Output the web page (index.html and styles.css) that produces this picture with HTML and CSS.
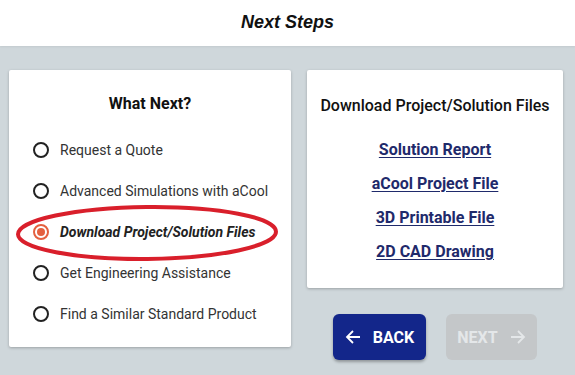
FILE: index.html
```html
<!DOCTYPE html>
<html>
<head>
<meta charset="utf-8">
<link rel="stylesheet" href="styles.css">
</head>
<body>
<header class="header"><h1 class="title">Next Steps</h1></header>
<main class="main">
  <section class="card left-card">
    <h2 class="card-title">What Next?</h2>
    <ul class="options">
      <li class="option"><span class="radio"></span><span class="label">Request a Quote</span></li>
      <li class="option"><span class="radio"></span><span class="label">Advanced Simulations with aCool</span></li>
      <li class="option selected"><span class="radio"><span class="dot"></span></span><span class="label">Download Project/Solution Files</span></li>
      <li class="option"><span class="radio"></span><span class="label">Get Engineering Assistance</span></li>
      <li class="option"><span class="radio"></span><span class="label">Find a Similar Standard Product</span></li>
    </ul>
    <svg class="circle-mark" width="270" height="62" viewBox="0 0 270 62">
      <ellipse cx="135" cy="31" rx="129" ry="26" fill="none" stroke="#d91f2b" stroke-width="4" transform="rotate(-0.6 135 31)"/>
    </svg>
  </section>
  <div class="right-col">
    <section class="card right-card">
      <h2 class="card-title small">Download Project/Solution Files</h2>
      <div class="links">
        <a class="link" href="#">Solution Report</a>
        <a class="link" href="#">aCool Project File</a>
        <a class="link" href="#">3D Printable File</a>
        <a class="link" href="#">2D CAD Drawing</a>
      </div>
    </section>
    <div class="buttons">
      <button class="btn back"><svg width="16" height="16" viewBox="0 0 16 16"><path d="M15 8H2M8 2L2 8l6 6" fill="none" stroke="#fff" stroke-width="1.8"/></svg><span>BACK</span></button>
      <button class="btn next"><span>NEXT</span><svg width="16" height="16" viewBox="0 0 16 16"><path d="M1 8h13M8 2l6 6-6 6" fill="none" stroke="#e4e7e9" stroke-width="1.8"/></svg></button>
    </div>
  </div>
</main>
</body>
</html>
```
FILE: styles.css
```css
html, body {
  margin: 0;
  padding: 0;
}
body {
  width: 575px;
  height: 375px;
  overflow: hidden;
  background: #cfd7db;
  font-family: Roboto, "Liberation Sans", sans-serif;
}
.header {
  height: 46px;
  background: #fff;
  display: flex;
  align-items: center;
  justify-content: center;
  box-shadow: 0 1px 2px rgba(0,0,0,0.06);
}
.title {
  margin: 0;
  font-family: "Liberation Sans", Arial, sans-serif;
  font-weight: bold;
  font-style: italic;
  font-size: 18px;
  color: #111;
  padding-bottom: 1px;
}
.main {
  display: flex;
  gap: 16px;
  padding: 24px 0 0 9px;
}
.card {
  background: #fff;
  border-radius: 2px;
  box-shadow: 0 1px 3px rgba(0,0,0,0.25);
  box-sizing: border-box;
}
.left-card {
  position: relative;
  width: 282px;
  height: 277px;
  padding-top: 24px;
}
.card-title {
  margin: 0;
  text-align: center;
  font-size: 16px;
  font-weight: 700;
  color: #111;
  line-height: 20px;
}
.card-title.small {
  font-weight: 500;
}
.options {
  list-style: none;
  margin: 0;
  padding: 15px 0 0 24px;
}
.option {
  display: flex;
  align-items: center;
  height: 41px;
  gap: 11px;
  font-size: 14px;
  color: #333;
}
.radio {
  box-sizing: border-box;
  width: 16px;
  height: 16px;
  border: 2px solid #222;
  border-radius: 50%;
  display: flex;
  align-items: center;
  justify-content: center;
  flex: none;
}
.selected .radio {
  border-color: #e4603f;
}
.dot {
  width: 8px;
  height: 8px;
  border-radius: 50%;
  background: #e4603f;
}
.selected .label {
  font-weight: 700;
  font-style: italic;
  color: #222;
}
.circle-mark {
  position: absolute;
  left: 3px;
  top: 132px;
}
.right-col {
  display: flex;
  flex-direction: column;
  width: 256px;
  gap: 26px;
}
.right-card {
  height: 218px;
  padding-top: 26px;
}
.links {
  display: flex;
  flex-direction: column;
  align-items: center;
  gap: 14px;
  padding-top: 24px;
}
.link {
  font-size: 16px;
  font-weight: 700;
  color: #1f2a6b;
  line-height: 20px;
  text-decoration: underline;
  text-underline-offset: 2px;
}
.buttons {
  display: flex;
  justify-content: center;
  gap: 20px;
}
.btn {
  height: 46px;
  border: none;
  border-radius: 6px;
  display: flex;
  align-items: center;
  justify-content: center;
  gap: 12px;
  font-family: Roboto, "Liberation Sans", sans-serif;
  font-weight: 700;
  font-size: 16px;
  padding: 0;
}
.back {
  width: 93px;
  background: #13268a;
  color: #fff;
  box-shadow: 0 2px 3px rgba(0,0,0,0.3);
}
.next {
  width: 91px;
  background: #c4c7c9;
  color: #e4e7e9;
}
```
